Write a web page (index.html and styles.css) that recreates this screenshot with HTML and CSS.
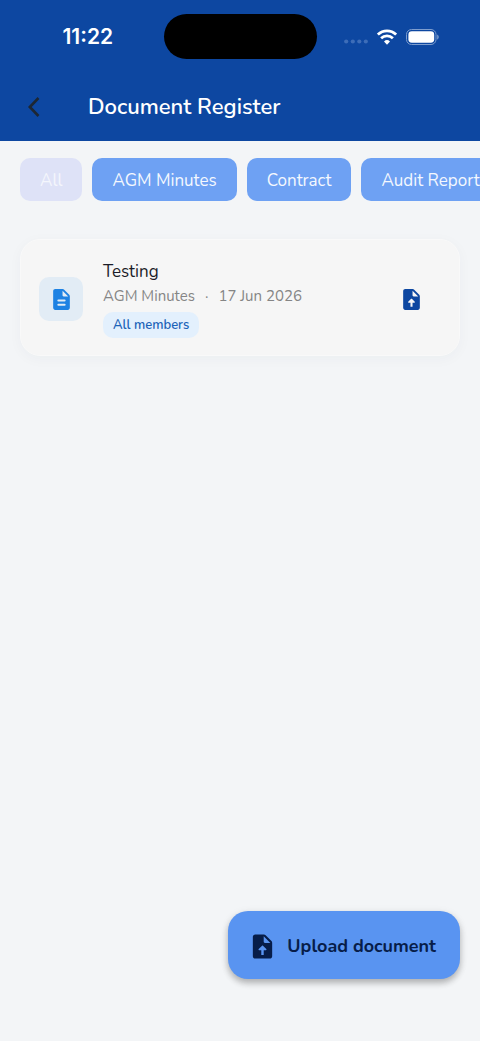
FILE: index.html
```html
<!DOCTYPE html>
<html lang="en">
<head>
<meta charset="utf-8">
<meta name="viewport" content="width=device-width, initial-scale=1">
<title>Document Register</title>
<link rel="stylesheet" href="styles.css">
</head>
<body>
<div class="app">
  <header class="header">
    <div class="status">
      <time class="clock">11:22</time>
      <div class="island"></div>
      <div class="indicators">
        <svg class="dots" width="24" height="16" viewBox="0 0 24 16" aria-hidden="true"><circle cx="2.2" cy="12.5" r="2.1"/><circle cx="8.8" cy="12.5" r="2.1"/><circle cx="15.3" cy="12.5" r="2.1"/><circle cx="21.8" cy="12.5" r="2.1"/></svg>
        <svg width="20" height="16" viewBox="0 0 20 16" fill="none" stroke="#fff" stroke-width="2.7" aria-hidden="true"><path d="M.9 5.6a12.9 12.9 0 0 1 18.2 0M4.1 9.2a8.4 8.4 0 0 1 11.8 0"/><path d="M10 15.7l-3-3.2a4.3 4.3 0 0 1 6 0z" fill="#fff" stroke="none"/></svg>
        <svg width="33" height="16" viewBox="0 0 33 16" aria-hidden="true"><rect x=".5" y=".5" width="29.5" height="15" rx="5" fill="none" stroke="#7d9dce"/><rect x="2.4" y="2.3" width="25.8" height="11.4" rx="3.4" fill="#fff"/><path d="M31.2 5.4c2 .8 2 4.4 0 5.2z" fill="#7d9dce"/></svg>
      </div>
    </div>
    <div class="titlebar">
      <button class="back" type="button" aria-label="Back"><svg width="14" height="22" viewBox="0 0 14 22" fill="none" stroke="#1d2733" stroke-width="2.6" aria-hidden="true"><path d="M11.5 2L2.8 11l8.7 9"/></svg></button>
      <h1 class="title">Document Register</h1>
    </div>
  </header>
  <nav class="filters" aria-label="Document type">
    <button class="chip chip-selected" type="button">All</button>
    <button class="chip" type="button">AGM Minutes</button>
    <button class="chip" type="button">Contract</button>
    <button class="chip" type="button">Audit Report</button>
  </nav>
  <main class="list">
    <article class="card">
      <div class="tile"><svg width="25" height="25" viewBox="0 0 24 24" fill="currentColor" aria-hidden="true"><path d="M14.59 2.59C14.21 2.21 13.7 2 13.17 2H6c-1.1 0-2 .9-2 2v16c0 1.1.89 2 1.99 2H18c1.1 0 2-.9 2-2V8.83c0-.53-.21-1.04-.59-1.41zM15 18H9c-1.33 0-1.33-2 0-2h6c1.33 0 1.33 2 0 2zm0-4H9c-1.33 0-1.33-2 0-2h6c1.33 0 1.33 2 0 2zm-2-6V3.5L18.5 9H14c-.55 0-1-.45-1-1z"/></svg></div>
      <div class="details">
        <h2 class="name">Testing</h2>
        <p class="meta"><span>AGM Minutes</span><span>·</span><span>17 Jun 2026</span></p>
        <span class="badge">All members</span>
      </div>
      <button class="upload" type="button" aria-label="Upload new version"><svg width="25" height="25" viewBox="0 0 24 24" fill="currentColor" aria-hidden="true"><path d="M14.59 2.59C14.21 2.21 13.7 2 13.17 2H6c-1.1 0-2 .9-2 2v16c0 1.1.89 2 1.99 2H18c1.1 0 2-.9 2-2V8.83c0-.53-.21-1.04-.59-1.41zM11 19v-4H9.2c-.45 0-.67-.54-.35-.85l2.8-2.8c.2-.2.51-.2.71 0l2.79 2.8c.31.31.09.85-.36.85H13v4zM13 8V3.5L18.5 9H14c-.55 0-1-.45-1-1z"/></svg></button>
    </article>
  </main>
  <footer class="actions">
    <button class="fab" type="button"><svg width="29" height="29" viewBox="0 0 24 24" fill="currentColor" aria-hidden="true"><path d="M14.59 2.59C14.21 2.21 13.7 2 13.17 2H6c-1.1 0-2 .9-2 2v16c0 1.1.89 2 1.99 2H18c1.1 0 2-.9 2-2V8.83c0-.53-.21-1.04-.59-1.41zM11 19v-4H9.2c-.45 0-.67-.54-.35-.85l2.8-2.8c.2-.2.51-.2.71 0l2.79 2.8c.31.31.09.85-.36.85H13v4zM13 8V3.5L18.5 9H14c-.55 0-1-.45-1-1z"/></svg><span>Upload document</span></button>
  </footer>
</div>
</body>
</html>
```
FILE: styles.css
```css
* { box-sizing: border-box; }
body {
  margin: 0;
  background: #f3f5f7;
  font-family: Nunito, "Open Sans", "Noto Sans", sans-serif;
}
h1, h2, p { margin: 0; }
button { border: 0; font: inherit; cursor: pointer; }
svg { display: block; flex: none; }
.app { min-height: 100vh; display: flex; flex-direction: column; overflow-x: hidden; }
.header { background: #0d47a1; }
.status {
  display: grid;
  grid-template-columns: 1fr 153px 1fr;
  align-items: center;
  padding-top: 14px;
}
.clock {
  justify-self: center;
  padding-left: 12px;
  font: 600 21px/28px Inter, sans-serif;
  color: #fff;
}
.island { height: 45px; border-radius: 24px; background: #000; }
.indicators { display: flex; align-items: center; justify-content: center; gap: 9px; padding-right: 14px; }
.dots { fill: #3d6db8; }
.titlebar { display: flex; align-items: center; gap: 30px; padding: 24px 20px 10px 10px; }
.back { display: grid; place-items: center; width: 48px; height: 48px; padding: 0; background: none; }
.title { font-size: 22px; line-height: 32px; font-weight: 600; color: #fff; }
.filters { display: flex; gap: 10px; padding: 17px 20px; }
.chip {
  flex: none;
  height: 43px;
  padding: 2px 20px 0;
  border-radius: 10px;
  background: #6ea1f3;
  color: #f4f8fe;
  font-size: 17px;
  line-height: 24px;
}
.chip-selected { background: #dee2f7; color: #f4f6fc; }
.list { flex: 1; padding: 21px 20px; }
.card {
  display: flex;
  align-items: center;
  gap: 20px;
  padding: 20px 24px 17px 18px;
  border: 1px solid #f9f9f9;
  border-radius: 20px;
  background: #f6f6f6;
  box-shadow: 0 3px 14px rgba(30, 50, 80, .035);
}
.tile { display: grid; place-items: center; width: 44px; height: 44px; border-radius: 10px; background: #e2ecf5; color: #1e82e3; }
.details { flex: 1; min-width: 0; }
.name { font-size: 17px; line-height: 24px; font-weight: 400; color: #1b1c28; }
.meta { display: flex; gap: 10px; font-size: 15px; line-height: 24px; color: #858585; }
.badge {
  display: inline-block;
  margin-top: 4px;
  padding: 3px 10px;
  border-radius: 10px;
  background: #e3f0fd;
  color: #1c63b8;
  font-size: 13px;
  line-height: 20px;
  font-weight: 600;
}
.upload { display: grid; place-items: center; width: 48px; height: 48px; padding: 0; background: none; color: #0d47a1; }
.actions { display: flex; justify-content: flex-end; padding: 0 20px 62px; }
.fab {
  display: flex;
  align-items: center;
  gap: 10px;
  height: 68px;
  padding: 2px 24px 0 20px;
  border-radius: 20px;
  background: #5994f1;
  color: #071d49;
  font-size: 18px;
  line-height: 24px;
  font-weight: 700;
  box-shadow: 0 4px 6px rgba(0, 0, 0, .24), 0 2px 10px rgba(0, 0, 0, .08);
}
```
